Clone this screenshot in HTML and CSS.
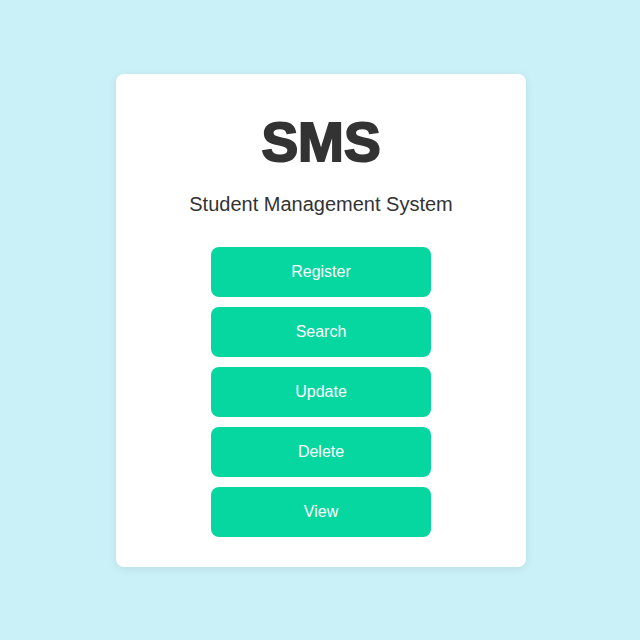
FILE: index.html
```html
<!DOCTYPE html>
<html lang="en">
<head>
<meta charset="utf-8">
<title>SMS</title>
<link rel="stylesheet" href="styles.css">
</head>
<body>
<main class="card">
  <h1 class="title">SMS</h1>
  <p class="subtitle">Student Management System</p>
  <nav class="actions">
    <button class="btn">Register</button>
    <button class="btn">Search</button>
    <button class="btn">Update</button>
    <button class="btn">Delete</button>
    <button class="btn">View</button>
  </nav>
</main>
</body>
</html>
```
FILE: styles.css
```css
* { box-sizing: border-box; }
html, body { margin: 0; padding: 0; }
body {
  height: 100vh;
  padding-left: 2px;
  background: #caf0f8;
  font-family: "Liberation Sans", Arial, sans-serif;
  display: flex;
  align-items: center;
  justify-content: center;
}
.card {
  width: 410px;
  background: #ffffff;
  border-radius: 8px;
  box-shadow: 0 2px 10px rgba(0, 0, 0, 0.08);
  padding: 36px 30px 30px;
  display: flex;
  flex-direction: column;
  align-items: center;
  text-align: center;
}
.title {
  margin: 0;
  font-size: 55px;
  line-height: 64px;
  font-weight: 900;
  color: #333333;
  -webkit-text-stroke: 2px #333333;
}
.subtitle {
  margin: 18px 0 0;
  font-size: 20px;
  line-height: 24px;
  color: #333333;
}
.actions {
  margin-top: 31px;
  display: flex;
  flex-direction: column;
  gap: 10px;
}
.btn {
  width: 220px;
  height: 50px;
  border: none;
  border-radius: 8px;
  background: #06d6a0;
  color: #ffffff;
  font-family: "Liberation Sans", Arial, sans-serif;
  font-size: 16px;
  cursor: pointer;
}
```
